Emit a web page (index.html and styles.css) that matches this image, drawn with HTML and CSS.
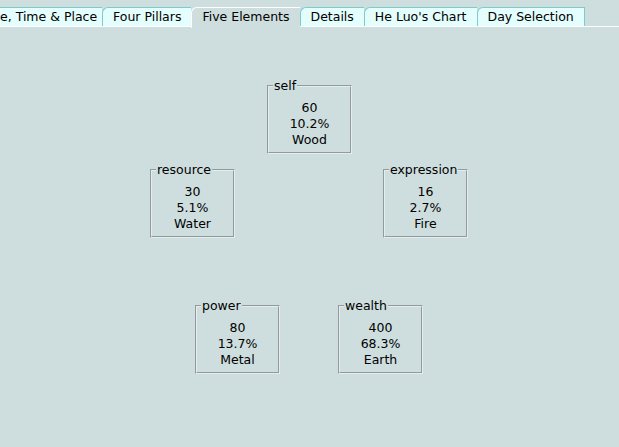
FILE: index.html
```html
<!DOCTYPE html>
<html lang="en">
<head>
  <meta charset="UTF-8">
  <title>Five Elements</title>
  <link rel="stylesheet" href="styles.css">
</head>
<body>
  <div class="tabs">
    <div class="tab first">e, Time &amp; Place</div>
    <div class="tab">Four Pillars</div>
    <div class="tab selected">Five Elements</div>
    <div class="tab">Details</div>
    <div class="tab">He Luo's Chart</div>
    <div class="tab">Day Selection</div>
  </div>

  <section class="chart">
    <fieldset class="element self">
      <legend>self</legend>
      <div>60</div>
      <div>10.2%</div>
      <div>Wood</div>
    </fieldset>
    <fieldset class="element resource">
      <legend>resource</legend>
      <div>30</div>
      <div>5.1%</div>
      <div>Water</div>
    </fieldset>
    <fieldset class="element expression">
      <legend>expression</legend>
      <div>16</div>
      <div>2.7%</div>
      <div>Fire</div>
    </fieldset>
    <fieldset class="element power">
      <legend>power</legend>
      <div>80</div>
      <div>13.7%</div>
      <div>Metal</div>
    </fieldset>
    <fieldset class="element wealth">
      <legend>wealth</legend>
      <div>400</div>
      <div>68.3%</div>
      <div>Earth</div>
    </fieldset>
  </section>
</body>
</html>
```

FILE: styles.css
```css
body {
  margin: 0;
  height: 447px;
  overflow: hidden;
  font-family: "DejaVu Sans", Verdana, sans-serif;
  font-size: 12.5px;
  color: #000;
  background-color: #cedede;
}
.tabs {
  display: flex;
  margin-top: 7px;
  border-bottom: 1px solid #ffffff;
  height: 19px;
}
.tab {
  height: 18px;
  line-height: 18px;
  padding: 0 10px;
  background-color: #e4fdfd;
  border: 1px solid #7ccccc;
  border-bottom: none;
  border-right: none;
  border-top-left-radius: 6px;
  white-space: nowrap;
  flex-shrink: 0;
}
.tab:last-child {
  border-right: 1px solid #7ccccc;
}
.tab.first {
  border-left: none;
  border-top-left-radius: 0;
  padding-left: 0;
  width: 92px;
}
.tab.selected {
  background-color: #cedede;
  border-color: #ffffff;
  height: 20px;
  position: relative;
  z-index: 1;
}
.chart {
  position: relative;
  height: 400px;
}
.element {
  position: absolute;
  box-sizing: border-box;
  width: 85px;
  height: 74px;
  margin: 0;
  padding: 8px 0 0;
  border: 2px groove #e4eeee;
  text-align: center;
  line-height: 16px;
}
.element legend {
  margin-left: 4px;
  padding: 0 1px;
  text-align: left;
  line-height: 12px;
}
.self { left: 267px; top: 53px; }
.resource { left: 150px; top: 137px; }
.expression { left: 383px; top: 137px; }
.power { left: 195px; top: 273px; }
.wealth { left: 338px; top: 273px; }
```
